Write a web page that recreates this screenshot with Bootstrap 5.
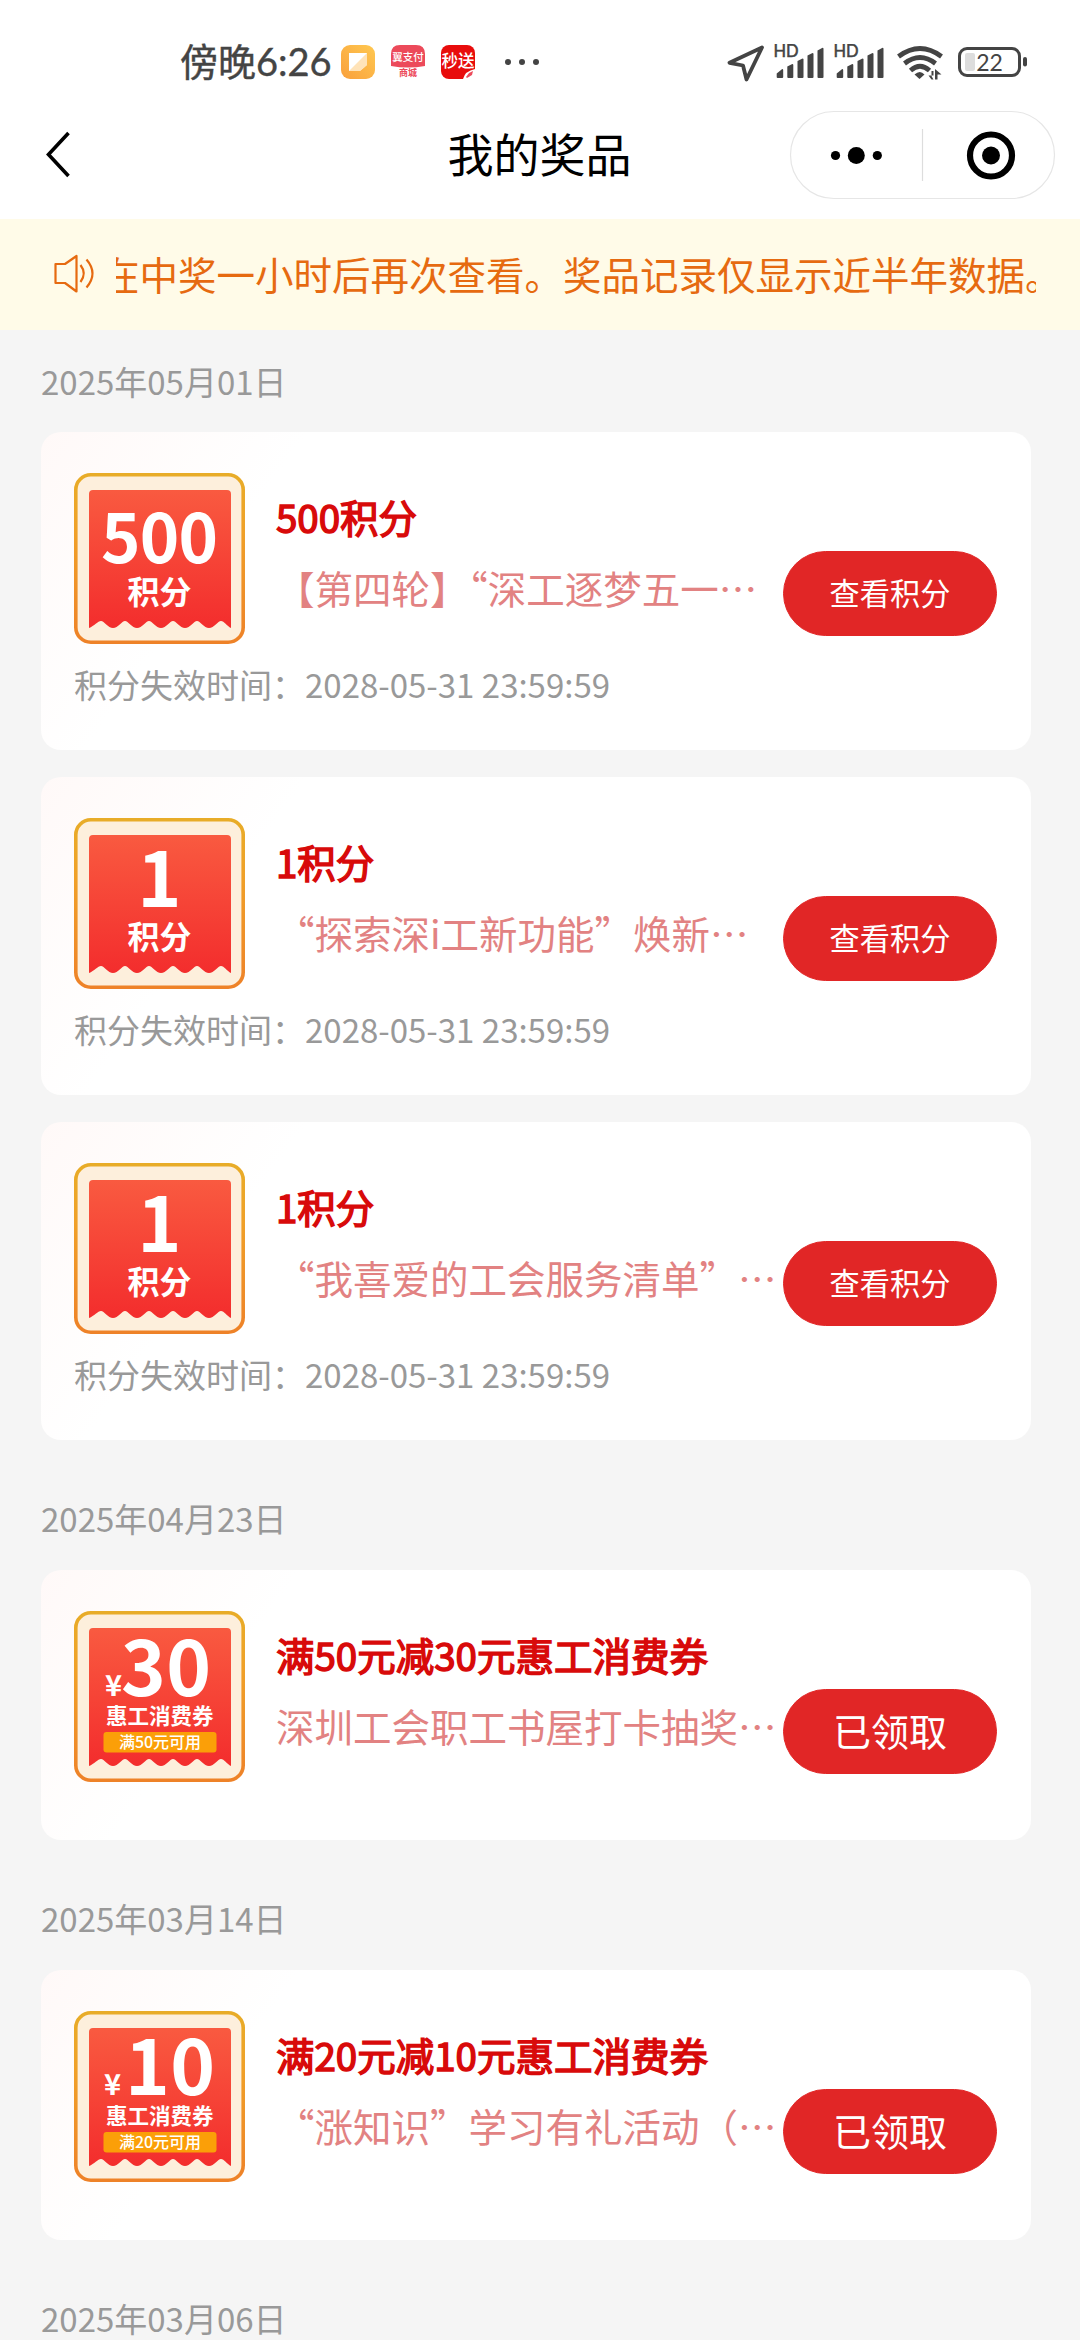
<!DOCTYPE html>
<html lang="zh-CN">
<head>
<meta charset="utf-8">
<meta name="viewport" content="width=device-width, initial-scale=1">
<title>我的奖品</title>
<link href="https://cdn.jsdelivr.net/npm/bootstrap@5.3.0/dist/css/bootstrap.min.css" rel="stylesheet">
<script src="https://cdn.jsdelivr.net/npm/bootstrap@5.3.0/dist/js/bootstrap.bundle.min.js"></script>
<style>
  html, body { height: 2340px; overflow: hidden; }
  body { background: #f5f5f5; font-family: "Noto Sans CJK SC", sans-serif; text-spacing-trim: space-all; }
  svg { display: block; flex: none; overflow: visible; }
  svg text { font-family: "Noto Sans CJK SC", sans-serif; }
  .status-bar { height: 110px; padding: 14px 48px 0 180px; color: #444; }
  .clock { font: 38px/1 Lato, "Noto Sans CJK SC", sans-serif; -webkit-text-stroke: .4px #444; width: 161px; white-space: nowrap; }
  .title-bar { height: 109px; padding: 0 24px 20px 42px; }
  .page-title { font-size: 46px; line-height: 60px; color: #000; padding-bottom: 6px; }
  .side { width: 248px; }
  .notice { height: 110.5px; background: #fffbe8; padding: 0 44px 0 52px; color: #e66a10; }
  .marquee-box { width: 920px; margin-left: 20px; overflow: hidden; font-size: 38.5px; line-height: 60px; white-space: nowrap; padding-bottom: 3px; }
  .marquee-box span { display: inline-block; margin-left: -15px; }
  .day { padding: 26px 49px 0 41px; }
  .day-label { font-size: 33px; line-height: 50px; color: #999; margin-bottom: 26.5px; }
  .prize { border: 0; border-radius: 20px; height: 318px; margin-bottom: 27px; padding: 41px 33px 0;
    background: linear-gradient(125deg, #fff9f8 0, #fff 22%); }
  .prize.short { height: 270.5px; padding-top: 41.5px; }
  .info { width: 507px; margin-left: 31px; padding-top: 13px; white-space: nowrap; font-size: 38.5px; }
  .info-name { line-height: 60px; color: #d80a0a; -webkit-text-stroke: 1.5px #d80a0a; }
  .info-desc { line-height: 60px; margin-top: 11px; color: #e28282; }
  .tight { font-feature-settings: "halt"; }
  .btn-prize { --bs-btn-color: #fff; --bs-btn-bg: #e12626; --bs-btn-border-color: #e12626;
    width: 214px; height: 85px; margin-top: 78px; padding: 0 0 2px; font-size: 30.2px; line-height: 1; border-radius: 43px; flex: none; }
  .btn-prize.big { font-size: 38px; padding-bottom: 4px; }
  .expire { font-size: 33px; line-height: 50px; color: #999; margin-top: 14.5px; white-space: nowrap; }
</style>
</head>
<body>
<svg width="0" height="0" class="position-absolute">
  <defs>
    <linearGradient id="gold" x1="0" y1="0" x2="0" y2="1"><stop offset="0" stop-color="#e8ac28"/><stop offset=".35" stop-color="#f0a028"/><stop offset="1" stop-color="#ee8228"/></linearGradient>
    <linearGradient id="red" x1="0" y1="0" x2="0" y2="1"><stop offset="0" stop-color="#f95a40"/><stop offset="1" stop-color="#f32d2d"/></linearGradient>
    <symbol id="frame" viewBox="0 0 171 171">
      <rect x="1.8" y="1.8" width="167.4" height="167.4" rx="15" fill="#fdefdc" stroke="url(#gold)" stroke-width="3.6"/>
      <path fill="url(#red)" d="M15 155V21q0-4 4-4H153q4 0 4 4V155c-4-2-7-7-10-7s-7 7-12 7-9-7-12-7-7 7-12 7-9-7-12-7-7 7-12 7-9-7-12-7-7 7-12 7-9-7-12-7-7 7-12 7-9-7-12-7-7 5-12 7z"/>
    </symbol>
    <symbol id="bars" viewBox="0 0 50 36">
      <text x="-.5" y="13" font-size="16.5" fill="#444" stroke="#444" stroke-width=".5" style="font-family:Lato,sans-serif">HD</text>
      <g fill="#444"><path d="M2.7 33v-3.5l5.5-4.500q1 0 1 1v7q0 1-1 1H3.700q-1 0-1-1z"/><path d="M13.300 33V22.500l5-2.500q1 0 1 1V33q0 1-1 1h-4q-1 0-1-1z"/><path d="M23.500 33V17l5-2.500q1 0 1 1V33q0 1-1 1h-4q-1 0-1-1z"/><path d="M33.500 33V11.500l5-2.500q1 0 1 1V33q0 1-1 1h-4q-1 0-1-1z"/><path d="M43.500 33V6.500l5-2.700q1 0 1 1V33q0 1-1 1h-4q-1 0-1-1z"/></g>
    </symbol>
  </defs>
</svg>

<header class="bg-white">
  <div class="status-bar d-flex align-items-start justify-content-between">
    <div class="d-flex align-items-start pt-4">
      <div class="clock pt-1">傍晚6:26</div>
      <svg width="200" height="50" viewBox="341 38 200 50">
        <defs><linearGradient id="org" x1="1" y1="0" x2="0" y2="1"><stop offset="0" stop-color="#ffc850"/><stop offset="1" stop-color="#f9a03c"/></linearGradient></defs>
        <rect x="341" y="45" width="34" height="34" rx="9" fill="url(#org)"/>
        <path d="M349 53h18v12l-7 6h-11z" fill="#fff"/><path d="M367 53v12l-7 6h-11z" fill="#ffd9a0" opacity=".75"/>
        <path d="M391 66V54q0-9 9-9h16q9 0 9 9v12q-17 3-34 0z" fill="#ec4a5a"/>
        <text x="408" y="61" text-anchor="middle" font-size="10.500" font-weight="500" fill="#fff">翼支付</text>
        <text x="408" y="76" text-anchor="middle" font-size="9" font-weight="700" fill="#ec4a5a">商城</text>
        <rect x="441" y="45" width="34" height="34" rx="8" fill="#e80c0c"/>
        <text x="458" y="67" text-anchor="middle" font-size="16.500" font-weight="500" fill="#fff">秒送</text>
        <path d="M463 79q2-8 12-10v10z" fill="#fff"/><path d="M466 77l3-4 4-2-1 4-5 3z" fill="#ec4a5a"/>
        <g fill="#444"><circle cx="508" cy="62" r="3"/><circle cx="522" cy="62" r="3"/><circle cx="536" cy="62" r="3"/></g>
      </svg>
    </div>
    <svg width="307" height="50" viewBox="725 38 307 50" class="mt-4">
      <path d="M762 47.500L729.500 62.800 743 65.500 746.500 79.500z" fill="none" stroke="#444" stroke-width="3.800" stroke-linejoin="round"/>
      <use href="#bars" x="774" y="44" width="50" height="36"/>
      <use href="#bars" x="834" y="44" width="50" height="36"/>
      <g fill="none" stroke="#444" stroke-width="4.800"><path d="M898.500 56.500q21.500-16 43 0"/><path d="M904.500 63.500q15.500-12 31 0"/><path d="M910.500 70.500q9.500-8.500 19 0"/></g>
      <path d="M914.500 74.500q5.500-5 10 0L919.500 79z" fill="#444"/>
      <path d="M928.500 75.500h5V79.500h-2zM935 71v8.500h2.500V74.500H941.500L935 69zM933.500 79.500V71h-2v5z" fill="#444"/>
      <rect x="959.500" y="48.500" width="60" height="27" rx="7.500" fill="none" stroke="#444" stroke-width="3"/>
      <rect x="965" y="53" width="10" height="18" rx="2" fill="#ddd"/>
      <text x="989.500" y="70.500" text-anchor="middle" font-size="23" fill="#444" style="font-family:Lato,sans-serif">22</text>
      <rect x="1023" y="57" width="4" height="9.500" rx="2" fill="#444"/>
    </svg>
  </div>
  <div class="title-bar d-flex align-items-center justify-content-between">
    <div class="side"><svg width="30" height="50" viewBox="42 130 30 50"><path d="M68.500 133L48.500 154.500 68.500 176" fill="none" stroke="#000" stroke-width="3.600"/></svg></div>
    <div class="page-title">我的奖品</div>
    <svg width="267" height="90" viewBox="790 109 267 90">
      <rect x="791.500" y="110.500" width="264" height="87" rx="43.500" fill="#fff" stroke="#e6e6e6" stroke-width="1.200"/>
      <path d="M923.500 128v52" stroke="#ddd" stroke-width="1.200"/>
      <circle cx="836.500" cy="154.500" r="4.600"/><circle cx="857.300" cy="154.500" r="8.500"/><circle cx="878.300" cy="154.500" r="4.600"/>
      <circle cx="992" cy="154.500" r="21" fill="none" stroke="#000" stroke-width="6.200"/><circle cx="992" cy="154.500" r="9"/>
    </svg>
  </div>
</header>

<div class="notice d-flex align-items-center">
  <svg width="44" height="44" viewBox="52 252 44 44" fill="none" stroke="#e66a10" stroke-width="2.200"><path d="M55.500 264h9.500l11.500-8v35.500l-11.500-8.500h-9.500z" stroke-linejoin="round"/><path d="M80.500 265q6.500 8.500 0 17"/><path d="M86.500 259.500q12 14 0 28"/></svg>
  <div class="marquee-box"><span>在中奖一小时后再次查看。奖品记录仅显示近半年数据。</span></div>
</div>

<main>
  <section class="day">
    <div class="day-label">2025年05月01日</div>
    <div class="card prize">
      <div class="d-flex align-items-start">
        <svg width="171" height="171"><use href="#frame"/><g fill="#fff" font-weight="700" text-anchor="middle"><text x="85.500" y="90" font-size="67" textLength="117">500</text><text x="85.500" y="131" font-size="32">积分</text></g></svg>
        <div class="info"><div class="info-name">500积分</div><div class="info-desc">【第四轮】<span class="tight">“</span>深工逐梦五一…</div></div>
        <button class="btn btn-prize">查看积分</button>
      </div>
      <div class="expire">积分失效时间：2028-05-31 23:59:59</div>
    </div>
    <div class="card prize">
      <div class="d-flex align-items-start">
        <svg width="171" height="171"><use href="#frame"/><g fill="#fff" font-weight="700" text-anchor="middle"><text x="85.500" y="89" font-size="75">1</text><text x="85.500" y="131" font-size="32">积分</text></g></svg>
        <div class="info"><div class="info-name">1积分</div><div class="info-desc">“探索深i工新功能”焕新…</div></div>
        <button class="btn btn-prize">查看积分</button>
      </div>
      <div class="expire">积分失效时间：2028-05-31 23:59:59</div>
    </div>
    <div class="card prize">
      <div class="d-flex align-items-start">
        <svg width="171" height="171"><use href="#frame"/><g fill="#fff" font-weight="700" text-anchor="middle"><text x="85.500" y="89" font-size="75">1</text><text x="85.500" y="131" font-size="32">积分</text></g></svg>
        <div class="info"><div class="info-name">1积分</div><div class="info-desc">“我喜爱的工会服务清单”…</div></div>
        <button class="btn btn-prize">查看积分</button>
      </div>
      <div class="expire">积分失效时间：2028-05-31 23:59:59</div>
    </div>
  </section>

  <section class="day">
    <div class="day-label">2025年04月23日</div>
    <div class="card prize short">
      <div class="d-flex align-items-start">
        <svg width="171" height="171"><use href="#frame"/><g fill="#fff" font-weight="700"><text x="31" y="85" font-size="29">¥</text><text x="47" y="85" font-size="76" textLength="90">30</text><text x="32" y="113" font-size="21.500">惠工消费券</text></g><rect x="29.500" y="121" width="113" height="20.500" rx="3" fill="#fb9f08"/><text x="86" y="137" font-size="16" font-weight="500" fill="#fff" text-anchor="middle">满50元可用</text></svg>
        <div class="info"><div class="info-name">满50元减30元惠工消费券</div><div class="info-desc">深圳工会职工书屋打卡抽奖…</div></div>
        <button class="btn btn-prize big">已领取</button>
      </div>
    </div>
  </section>

  <section class="day">
    <div class="day-label">2025年03月14日</div>
    <div class="card prize short">
      <div class="d-flex align-items-start">
        <svg width="171" height="171"><use href="#frame"/><g fill="#fff" font-weight="700"><text x="30" y="84" font-size="29">¥</text><text x="51" y="84" font-size="76" textLength="90">10</text><text x="32" y="113" font-size="21.500">惠工消费券</text></g><rect x="29.500" y="121" width="113" height="20.500" rx="3" fill="#fb9f08"/><text x="86" y="137" font-size="16" font-weight="500" fill="#fff" text-anchor="middle">满20元可用</text></svg>
        <div class="info"><div class="info-name">满20元减10元惠工消费券</div><div class="info-desc">“涨知识”学习有礼活动（…</div></div>
        <button class="btn btn-prize big">已领取</button>
      </div>
    </div>
  </section>

  <section class="day"><div class="day-label">2025年03月06日</div></section>
</main>
</body>
</html>
